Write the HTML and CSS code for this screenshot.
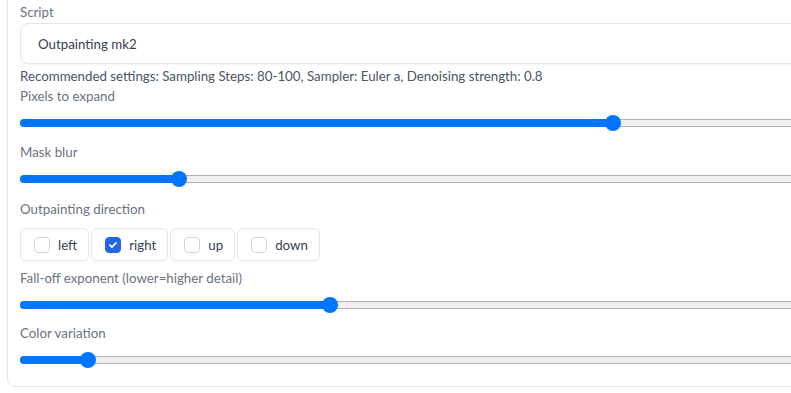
FILE: index.html
```html
<!DOCTYPE html>
<html lang="en">
<head>
  <meta charset="UTF-8">
  <title>Outpainting mk2</title>
  <link rel="stylesheet" href="styles.css">
</head>
<body>

  <div class="panel">
    <div class="label">Script</div>
    <div class="select">Outpainting mk2</div>
    <div class="note">Recommended settings: Sampling Steps: 80-100, Sampler: Euler a, Denoising strength: 0.8</div>

    <div class="label">Pixels to expand</div>
    <div class="slider" style="--p: 0.4839">
      <div class="track"><div class="fill"></div></div>
      <div class="thumb"></div>
    </div>

    <div class="label gap-slider">Mask blur</div>
    <div class="slider" style="--p: 0.125">
      <div class="track"><div class="fill"></div></div>
      <div class="thumb"></div>
    </div>

    <div class="label gap-group">Outpainting direction</div>
    <div class="checks">
      <label class="check"><span class="box"></span>left</label>
      <label class="check"><span class="box on">
        <svg viewBox="0 0 16 16" width="16" height="16"><path d="M4.5 8.2l2.3 2.2 4.7-4.8" fill="none" stroke="#fff" stroke-width="2" stroke-linecap="round" stroke-linejoin="round"/></svg>
      </span>right</label>
      <label class="check"><span class="box"></span>up</label>
      <label class="check"><span class="box"></span>down</label>
    </div>

    <div class="label gap-checks">Fall-off exponent (lower=higher detail)</div>
    <div class="slider" style="--p: 0.25">
      <div class="track"><div class="fill"></div></div>
      <div class="thumb"></div>
    </div>

    <div class="label gap-slider2">Color variation</div>
    <div class="slider" style="--p: 0.05">
      <div class="track"><div class="fill"></div></div>
      <div class="thumb"></div>
    </div>
  </div>

</body>
</html>
```

FILE: styles.css
```css
html, body {
  margin: 0;
  padding: 0;
  background: #fff;
  overflow: hidden;
  font-family: Lato, 'Noto Sans', sans-serif;
  font-size: 13.3px;
}

.panel {
  margin: -10px 0 0 7px;
  width: 1225px;
  border: 1px solid #e5e7eb;
  border-radius: 8px;
  padding: 11px 12px 16px;
}

.label {
  line-height: 20px;
  color: #6b7280;
}

.select {
  margin-top: 1px;
  height: 39px;
  border: 1px solid #e5e7eb;
  border-radius: 8px;
  padding-left: 17px;
  display: flex;
  align-items: center;
  color: #374151;
  box-shadow: 0 1px 2px rgba(0,0,0,0.04);
}

.note {
  margin-top: 2px;
  line-height: 20px;
  color: #4b5563;
}

.gap-slider {
  margin-top: 9px;
}

.gap-group {
  margin-top: 10px;
}

.gap-checks {
  margin-top: 7px;
}

.gap-slider2 {
  margin-top: 8px;
}

/* sliders */
.slider {
  position: relative;
  height: 20px;
  margin-top: 7px;
}

.track {
  position: absolute;
  left: 0; right: 0; top: 6px;
  height: 6px;
  background: #efefef;
  border-top: 1px solid #b3b3b3;
  border-bottom: 1px solid #b3b3b3;
  border-radius: 4px 0 0 4px;
}

.fill {
  position: absolute;
  left: 0; top: -1px; bottom: -1px;
  width: calc(8px + var(--p) * (100% - 16px));
  background: #0075ff;
  border-radius: 4px 0 0 4px;
}

.thumb {
  position: absolute;
  top: 2px;
  left: calc(var(--p) * (100% - 16px));
  width: 16px;
  height: 16px;
  border-radius: 50%;
  background: #0075ff;
}

/* checkbox group */
.checks {
  margin-top: 9px;
  display: flex;
  gap: 2px;
}

.check {
  display: flex;
  align-items: center;
  gap: 8px;
  height: 31px;
  padding: 0 11px 0 13px;
  border: 1px solid #e5e7eb;
  border-radius: 6px;
  color: #374151;
  box-shadow: 0 1px 2px rgba(0,0,0,0.04);
}

.box {
  width: 14px;
  height: 14px;
  border: 1px solid #d1d5db;
  border-radius: 4px;
  background: #fff;
  display: flex;
  align-items: center;
  justify-content: center;
}

.box.on {
  background: #2563eb;
  border-color: #2563eb;
}
```
